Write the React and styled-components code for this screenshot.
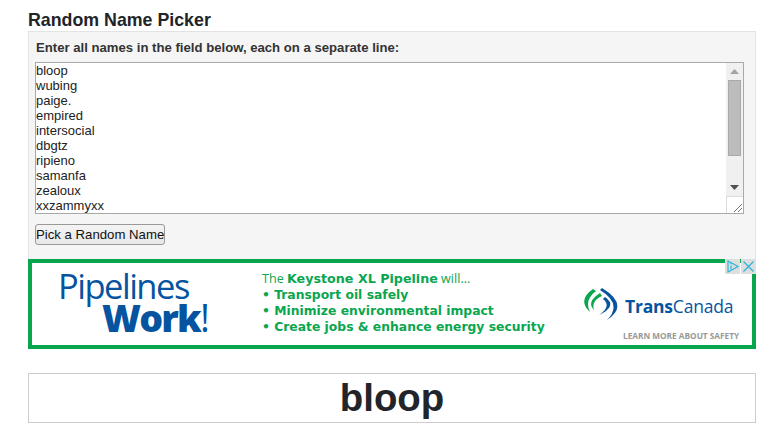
import React from "react";
import styled, { createGlobalStyle } from "styled-components";

const Global = createGlobalStyle`
  html, body { margin: 0; padding: 0; background: #fff; }
  body { font-family: "Liberation Sans", Arial, sans-serif; color: #212529; }
`;

const Page = styled.main`
  width: 728px;
  margin-left: 28px;
  padding-top: 10px;
`;

const Title = styled.h1`
  margin: 0;
  font-size: 17.8px;
  line-height: 20px;
  height: 21px;
  font-weight: 700;
  color: #212529;
`;

const Panel = styled.section`
  box-sizing: border-box;
  height: 228px;
  background: #f5f5f5;
  border: 1px solid #e3e3e3;
  border-bottom: 0;
  padding: 8px 6px 0;
  display: flex;
  flex-direction: column;
  align-items: flex-start;
`;

const Label = styled.label`
  font-size: 13.15px;
  line-height: 15px;
  font-weight: 700;
  color: #333;
  padding-left: 1px;
  margin-bottom: 7px;
`;

const Field = styled.div`
  position: relative;
  width: 709px;
  height: 152px;
  margin-bottom: 10px;
`;

const Names = styled.textarea`
  box-sizing: border-box;
  display: block;
  width: 100%;
  height: 100%;
  margin: 0;
  padding: 0;
  border: 1px solid #a9a9a9;
  background: #fff;
  color: #222;
  font-family: "Liberation Sans", Arial, sans-serif;
  font-size: 13px;
  line-height: 15px;
  resize: none;
  overflow: hidden;
  outline: none;
`;

const Scrollbar = styled.div`
  position: absolute;
  top: 1px;
  right: 1px;
  bottom: 1px;
  width: 17px;
  display: flex;
  flex-direction: column;
  background: #f0f0f0;
`;

const ScrollArrow = styled.div`
  flex: 0 0 17px;
  display: flex;
  align-items: center;
  justify-content: center;
  svg { display: block; }
`;

const ScrollTrack = styled.div`
  flex: 1;
  display: flex;
  justify-content: center;
  align-items: flex-start;
`;

const ScrollThumb = styled.div`
  box-sizing: border-box;
  width: 13px;
  height: 76px;
  background: #bcbcbc;
  border: 1px solid #a9a9a9;
`;

const Grip = styled.div`
  box-sizing: border-box;
  flex: 0 0 17px;
  background: #fff;
  border-top: 1px solid #dcdcdc;
  border-left: 1px solid #dcdcdc;
  svg { display: block; }
`;

const PickButton = styled.button`
  box-sizing: border-box;
  width: 130px;
  height: 21px;
  padding: 0;
  border: 1px solid #999;
  border-radius: 3px;
  background: linear-gradient(#f4f4f4, #e8e8e8);
  color: #111;
  font-family: "Liberation Sans", Arial, sans-serif;
  font-size: 13.2px;
  line-height: 15px;
  white-space: nowrap;
`;

const Ad = styled.aside`
  position: relative;
  box-sizing: border-box;
  height: 90px;
  border: 4px solid #0aa64f;
  background: #fff;
  display: grid;
  grid-template-columns: 230px 321px 1fr;
`;

const Slogan = styled.div`
  padding: 5px 0 0 26px;
  font-family: "Open Sans", sans-serif;
  color: #06549f;
  display: flex;
  flex-direction: column;
`;

const SloganLight = styled.span`
  font-size: 34.5px;
  line-height: 36px;
  letter-spacing: -1.5px;
  font-weight: 400;
`;

const SloganBold = styled.span`
  font-size: 37.5px;
  line-height: 27px;
  font-weight: 800;
  letter-spacing: -1.8px;
  padding-left: 44px;
`;

const SloganBang = styled.span`
  font-weight: 400;
`;

const Claims = styled.div`
  padding-top: 8px;
  font-family: "DejaVu Sans", sans-serif;
  font-weight: 700;
  font-size: 12.35px;
  line-height: 16px;
  color: #0aa64f;
  white-space: nowrap;
`;

const Lead = styled.div`
  font-family: "Open Sans", sans-serif;
  font-weight: 400;
  font-size: 12.6px;
  b { font-family: "DejaVu Sans", sans-serif; font-weight: 700; font-size: 12.7px; }
`;

const Brand = styled.div`
  padding-top: 24px;
  display: flex;
  flex-direction: column;
`;

const BrandRow = styled.div`
  display: flex;
  align-items: center;
  gap: 7px;
`;

const BrandName = styled.div`
  font-family: "Open Sans", sans-serif;
  font-size: 17.5px;
  line-height: 22px;
  color: #06549f;
  letter-spacing: -0.2px;
  b { font-weight: 700; }
`;

const Safety = styled.div`
  margin: 6px 0 0 40px;
  font-family: "Open Sans", sans-serif;
  font-weight: 700;
  font-size: 8.25px;
  line-height: 10px;
  color: #999;
  white-space: nowrap;
`;

const AdControls = styled.div`
  position: absolute;
  top: -4px;
  right: -4px;
  display: flex;
  gap: 1px;
`;

const AdControl = styled.span`
  display: block;
  width: 15px;
  height: 15px;
  background: #dedede;
  svg { display: block; }
`;

const Result = styled.output`
  display: block;
  box-sizing: border-box;
  height: 50px;
  margin-top: 24px;
  border: 1px solid #ccc;
  text-align: center;
  font-size: 38.4px;
  line-height: 48px;
  font-weight: 700;
  color: #212529;
`;

const names = ["bloop","wubing","paige.","empired","intersocial","dbgtz","ripieno","samanfa","zealoux","xxzammyxx"].join("\n");

const Logo = () => (
  <svg width="35" height="38" viewBox="0 0 35 38" fill="none">
    <path d="M10 2 Q-6 13 7 25 Q1 13 13 4 Z" fill="#0aa64f" />
    <path d="M17 6 Q3 15 11 23 Q8 14 19 9 Z" fill="#0aa64f" />
    <path d="M19 1 Q47 18 24 33 Q40 17 17 3 Z" fill="#06549f" />
    <path d="M22 10 Q35 19 16 28 Q29 19 20 12 Z" fill="#06549f" />
  </svg>
);

export default function App() {
  return (
    <Page>
      <Global />
      <Title>Random Name Picker</Title>
      <Panel>
        <Label htmlFor="names">Enter all names in the field below, each on a separate line:</Label>
        <Field>
          <Names id="names" defaultValue={names} spellCheck={false} />
          <Scrollbar>
            <ScrollArrow>
              <svg width="9" height="5" viewBox="0 0 9 5"><path d="M4.5 0 L9 5 L0 5 Z" fill="#a3a3a3" /></svg>
            </ScrollArrow>
            <ScrollTrack><ScrollThumb /></ScrollTrack>
            <ScrollArrow>
              <svg width="9" height="5" viewBox="0 0 9 5"><path d="M0 0 L9 0 L4.5 5 Z" fill="#505050" /></svg>
            </ScrollArrow>
            <Grip>
              <svg width="16" height="16" viewBox="0 0 16 16" fill="none" stroke="#777" strokeWidth="1">
                <path d="M7 15 L15 7 M11 15 L15 11" />
              </svg>
            </Grip>
          </Scrollbar>
        </Field>
        <PickButton type="button">Pick a Random Name</PickButton>
      </Panel>
      <Ad>
        <Slogan>
          <SloganLight>Pipelines</SloganLight>
          <SloganBold>Work<SloganBang>!</SloganBang></SloganBold>
        </Slogan>
        <Claims>
          <Lead>The <b>Keystone XL Pipeline</b> will...</Lead>
          <div>• Transport oil safely</div>
          <div>• Minimize environmental impact</div>
          <div>• Create jobs &amp; enhance energy security</div>
        </Claims>
        <Brand>
          <BrandRow>
            <Logo />
            <BrandName><b>Trans</b>Canada</BrandName>
          </BrandRow>
          <Safety>LEARN MORE ABOUT SAFETY</Safety>
        </Brand>
        <AdControls>
          <AdControl>
            <svg width="15" height="15" viewBox="0 0 15 15" fill="none" stroke="#29b6dc" strokeWidth="1.2">
              <path d="M3 2 L13 7.5 L3 13 Z" />
              <path d="M6 6.5 V10.5 M6 4 V5.2" />
            </svg>
          </AdControl>
          <AdControl>
            <svg width="15" height="15" viewBox="0 0 15 15" fill="none" stroke="#29b6dc" strokeWidth="1.3">
              <path d="M2.5 2.5 L12.5 12.5 M12.5 2.5 L2.5 12.5" />
            </svg>
          </AdControl>
        </AdControls>
      </Ad>
      <Result>bloop</Result>
    </Page>
  );
}
